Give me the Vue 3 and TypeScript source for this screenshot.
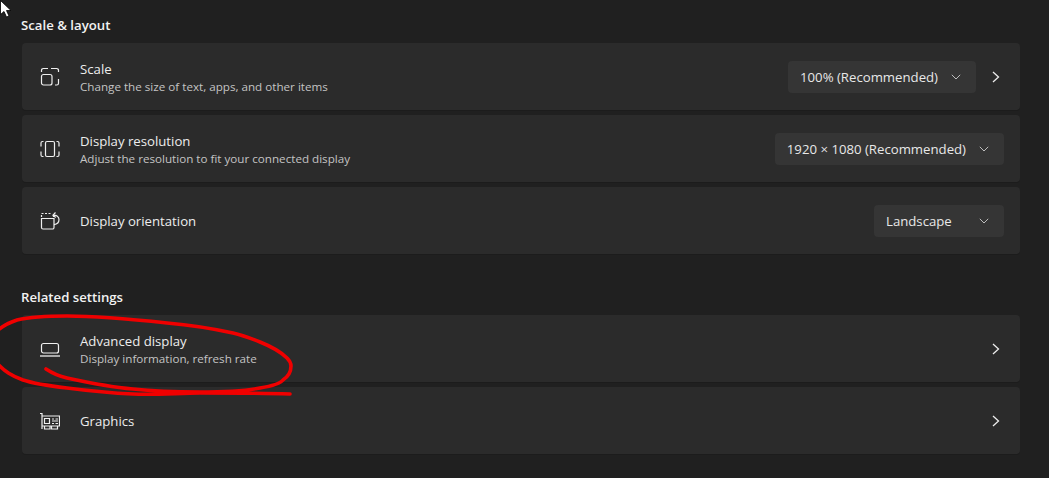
<script setup lang="ts">
interface Row {
  id: string
  title: string
  sub?: string
  select?: string
  chevron?: boolean
}
const layoutRows: Row[] = [
  { id: 'scale', title: 'Scale', sub: 'Change the size of text, apps, and other items', select: '100% (Recommended)', chevron: true },
  { id: 'res', title: 'Display resolution', sub: 'Adjust the resolution to fit your connected display', select: '1920 × 1080 (Recommended)' },
  { id: 'orient', title: 'Display orientation', select: 'Landscape' },
]
const relatedRows: Row[] = [
  { id: 'adv', title: 'Advanced display', sub: 'Display information, refresh rate', chevron: true },
  { id: 'gfx', title: 'Graphics', chevron: true },
]
const groups = [
  { heading: 'Scale & layout', rows: layoutRows },
  { heading: 'Related settings', rows: relatedRows },
]
</script>

<template>
  <div class="page">
    <section v-for="g in groups" :key="g.heading" class="group">
      <h2 class="heading">{{ g.heading }}</h2>
      <div class="list">
        <div v-for="r in g.rows" :key="r.id" class="card">
          <svg class="icon" width="20" height="20" viewBox="0 0 20 20" fill="none" stroke="#efefef" stroke-width="1.2">
            <template v-if="r.id === 'scale'">
              <path d="M1.500 5V3.300A1.800 1.800 0 0 1 3.300 1.500H8M11 1.500h5.700a1.800 1.800 0 0 1 1.800 1.800V5M18.500 12v4.200a1.800 1.800 0 0 1-1.800 1.800H15" />
              <rect x="1.500" y="7.500" width="10.500" height="10.500" rx="2" />
            </template>
            <template v-else-if="r.id === 'res'">
              <rect x="5.500" y="2.500" width="9" height="15" rx="1.500" />
              <path d="M3.500 2.500h-1A1.500 1.500 0 0 0 1 4v3.500M1 12.500V16a1.500 1.500 0 0 0 1.500 1.500h1M16.500 2.500h1A1.500 1.500 0 0 1 19 4v3.500M19 12.500V16a1.500 1.500 0 0 1-1.500 1.500h-1" />
            </template>
            <template v-else-if="r.id === 'orient'">
              <path d="M1.500 7.500H14V16.500A1.500 1.500 0 0 1 12.500 18H3A1.500 1.500 0 0 1 1.500 16.500Z" />
              <path d="M1.500 2.500H12M1.500 4V7M13.500 4V7" stroke-dasharray="2 1.500" />
              <path d="M15.500 1.500 13 4.200l2.700 2.300M13.300 4.200c3.200-.4 5.700 1.500 5.700 4.400 0 2.700-2 4.700-5 5" />
            </template>
            <template v-else-if="r.id === 'adv'">
              <rect x="1.500" y="4.500" width="17" height="9.500" rx="2" />
              <path d="M0 17h20" stroke-width="1.300" />
            </template>
            <template v-else>
              <path d="M0 2.500h2v15.500M2 5h17.500v10H2M4.500 15v3h5.500v-3M11.500 15v3h6v-3" />
              <path d="M4.500 7.500h5V12.500h-5zM12 8h2M15.500 8h2.500M12 10h6M12 12.500h2M15.500 12.500h2.500" />
            </template>
          </svg>
          <div class="text">
            <div class="title">{{ r.title }}</div>
            <div v-if="r.sub" class="sub">{{ r.sub }}</div>
          </div>
          <div v-if="r.select" class="select">
            <span>{{ r.select }}</span>
            <svg width="10" height="6" viewBox="0 0 10 6" fill="none" stroke="#bdbdbd" stroke-width="1"><path d="M.8 .8 5 5 9.200 .8" /></svg>
          </div>
          <svg v-if="r.chevron" class="chev" width="8" height="12" viewBox="0 0 8 12" fill="none" stroke="#ececec" stroke-width="1.300"><path d="M1 1 6.500 6 1 11" /></svg>
        </div>
      </div>
    </section>

    <svg class="ink" width="1049" height="478" viewBox="0 0 1049 478" fill="none" stroke="#f00000" stroke-width="3.600" stroke-linecap="round" stroke-linejoin="round">
      <path d="M46 369C52 373 58 376 67 378C90 383 110 387 133 389C160 392 180 392 200 392C225 392 245 391 260 388C272 386 280 384 283 380C289 376 291 371 291 366C291 362 289 360 287 358C280 351 270 346 260 342C250 338 242 335 233 333C210 328 190 325 167 323C130 319 100 316 67 316C45 316 30 317 17 320C8 323 2 326 -4 332M-4 362C5 372 12 376 23 380C35 384 50 386 67 388C90 391 110 393 133 394C155 395 180 393 200 393C230 393 260 393 290 394" />
    </svg>

    <svg class="cursor" width="12" height="18" viewBox="0 0 12 18">
      <path d="M.5 .5V14.500L4 11.500 6.500 17 9 16 6.500 10.500H11Z" fill="#fff" stroke="#000" stroke-width=".8" />
    </svg>
  </div>
</template>

<style scoped>
.page {
  position: relative;
  box-sizing: border-box;
  width: 1049px;
  height: 478px;
  overflow: hidden;
  background: #202020;
  padding: 16px 29px 0 22px;
  font-family: "Open Sans", "Noto Sans", "Liberation Sans", sans-serif;
  color: #f2f2f2;
}
.group + .group {
  margin-top: 34px;
}
.heading {
  margin: 0 0 8px -1px;
  font-size: 13.200px;
  line-height: 19px;
  font-weight: 600;
  color: #f2f2f2;
}
.list {
  display: flex;
  flex-direction: column;
  gap: 5px;
}
.card {
  box-sizing: border-box;
  height: 67px;
  background: #2b2b2b;
  border-radius: 4px;
  box-shadow: 0 1px 0 #1c1c1c;
  display: flex;
  align-items: center;
  padding: 0 16px 0 18px;
}
.icon {
  flex: none;
  margin-right: 20px;
}
.text {
  flex: 1;
  min-width: 0;
  padding-top: 1px;
}
.title {
  font-size: 13.200px;
  line-height: 19px;
  color: #ededed;
}
.sub {
  font-size: 11.650px;
  line-height: 16px;
  color: #c4c4c4;
}
.select {
  box-sizing: border-box;
  height: 32px;
  min-width: 130px;
  display: flex;
  align-items: center;
  justify-content: space-between;
  gap: 13px;
  padding: 0 15px 0 12px;
  background: #353535;
  border-radius: 4px;
  font-size: 13.200px;
  color: #e8e8e8;
}
.chev {
  flex: none;
  margin-left: 16px;
  margin-right: 4px;
}
.ink {
  position: absolute;
  left: 0;
  top: 0;
  pointer-events: none;
}
.cursor {
  position: absolute;
  left: 0;
  top: 0;
}
</style>
